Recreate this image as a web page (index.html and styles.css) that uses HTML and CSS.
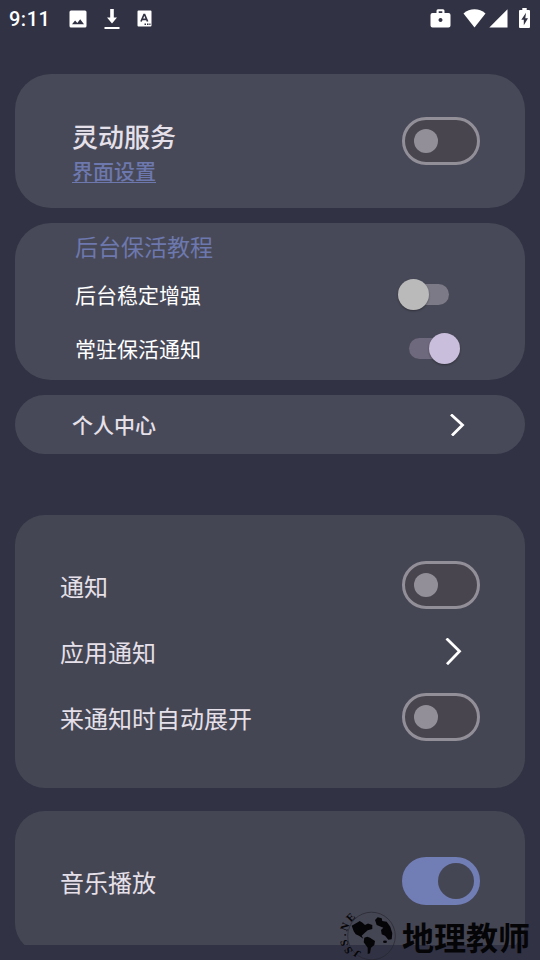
FILE: index.html
```html
<!DOCTYPE html>
<html lang="zh-CN">
<head>
<meta charset="utf-8">
<title>灵动服务</title>
<link rel="stylesheet" href="styles.css">
</head>
<body>
<header class="status">
  <span class="clock">9:11</span>
  <svg class="ic-image" width="18" height="18" viewBox="0 0 18 18"><path fill-rule="evenodd" d="M2 .5h14a1.500 1.500 0 0 1 1.500 1.500v14a1.500 1.500 0 0 1-1.500 1.500H2A1.500 1.500 0 0 1 .5 16V2A1.500 1.500 0 0 1 2 .5zM3 14.200h12l-3.800-5-2.900 3.700-2.200-2.500z"/></svg>
  <svg class="ic-down" width="16" height="21" viewBox="0 0 16 21"><path d="M6.200 0h3.600v8.500H13l-5 6-5-6h3.200zM.5 18h15v2H.5z"/></svg>
  <svg class="ic-lang" width="15" height="17" viewBox="0 0 15 17"><path d="M1.500.5h12a1 1 0 0 1 1 1v14a1 1 0 0 1-1 1h-12a1 1 0 0 1-1-1v-14a1 1 0 0 1 1-1z"/><path class="ink-line" d="M4 11.500 7 4.500h.6l3 7M5 9.300h4.500"/><path class="ink" d="M7.500 13.500h1.500V15H7.500zM10 13.500h1.500V15H10zM12.300 13.500h1.200V15h-1.200z"/></svg>
  <span class="spacer"></span>
  <svg class="ic-case" width="21" height="19" viewBox="0 0 21 19"><path fill-rule="evenodd" d="M6.500 4V1.800Q6.500 .3 8 .3h5Q14.500 .3 14.500 1.800V4h4Q20.500 4 20.500 6v10.500q0 2-2 2h-16q-2 0-2-2V6q0-2 2-2zm2.200 0h3.600V2.300H8.700zm1.800 5a2 2 0 1 0 .01 0z"/></svg>
  <svg class="ic-wifi" width="23" height="19" viewBox="0 0 23 19"><path d="M.5 4.500Q5.500.3 11.500.3t11 4.200L11.500 18.500z"/></svg>
  <svg class="ic-cell" width="19" height="19" viewBox="0 0 19 19"><path d="M18.500.3v18.200H.3z"/></svg>
  <svg class="ic-batt" width="11" height="20" viewBox="0 0 11 20"><path d="M3.300 0h4.400v2H10a1 1 0 0 1 1 1v16a1 1 0 0 1-1 1H1a1 1 0 0 1-1-1V3a1 1 0 0 1 1-1h2.300z"/><path class="ink" d="M7 4.800 2.300 11.700h2.500v5.500L9 10.200H6.300z"/></svg>
</header>
<main class="page">
  <section class="card service">
    <div class="titles">
      <h1 class="title">灵动服务</h1>
      <a class="link">界面设置</a>
    </div>
    <span class="toggle"></span>
  </section>
  <section class="card keep">
    <a class="guide">后台保活教程</a>
    <div class="row small"><span>后台稳定增强</span><span class="slider"></span></div>
    <div class="row small"><span>常驻保活通知</span><span class="slider on"></span></div>
  </section>
  <section class="card profile">
    <span class="label">个人中心</span>
    <svg width="15" height="22" viewBox="0 0 15 22"><path d="M1 .5 12.500 11 2 21.500"/></svg>
  </section>
  <section class="card notice">
    <div class="row"><span>通知</span><span class="toggle"></span></div>
    <div class="row"><span>应用通知</span><svg class="arrow" width="17" height="27" viewBox="0 0 17 27"><path d="M1.500 .5 14.500 13.300 2 26.200"/></svg></div>
    <div class="row"><span>来通知时自动展开</span><span class="toggle"></span></div>
  </section>
  <section class="card music">
    <div class="row"><span>音乐播放</span><span class="toggle on"></span></div>
  </section>
</main>
<div class="mark">
  <svg width="64" height="50" viewBox="0 0 64 50">
    <circle class="ring" cx="33.500" cy="26" r="23.800"/>
    <path d="M13.700 15.700l6-3.400 2-1.300 2.500 1.500 2.800 2.500 3-1.500 4.300 1.500v4l-4.600 1.300-3.400 3-2.600 2.400 1.600 3-4.300-3-3.300-1.400-2-3z"/>
    <path d="M26.300 27.700l3-1 2.700 1 5 3.300-.7 4-3.300 2.700-1 5.600-2.300.8v-6.400l-4-5.400z"/>
    <path d="M37 10l2.700-2.700 4 1 .6 2.700 4.400.7 3.600 5 2 6.600-.6 6-3.400.4-3.300-4-3.300-1.400-.7-4.300 2.300-2.300-6.600-2.700z"/>
    <ellipse cx="47" cy="31.700" rx="2" ry="1.300"/>
    <g class="letters"><text transform="translate(19 44) rotate(-144)">J</text><text transform="translate(10 40.500) rotate(-122)">S</text><text transform="translate(6 33) rotate(-104)">S</text><text transform="translate(6.500 25) rotate(-90)">·</text><text transform="translate(6.500 16.500) rotate(-68)">N</text><text transform="translate(12.500 7) rotate(-46)">E</text></g>
  </svg>
  <span class="brand">地理教师</span>
</div>
</body>
</html>
```
FILE: styles.css
```css
* { box-sizing: border-box; }
body {
  margin: 0;
  width: 540px;
  height: 960px;
  overflow: hidden;
  position: relative;
  background: #313244;
  color: #e5e0e9;
  font-family: "Noto Sans CJK SC", sans-serif;
}
.status {
  height: 37px;
  padding: 0 10px 0 9px;
  display: flex;
  align-items: center;
  fill: #fff;
}
.clock { font: 500 20px/37px Roboto, sans-serif; color: #fff; width: 60px; padding-top: 1px; letter-spacing: 0.5px; }
.ic-down { margin: 1px 0 0 17px; }
.ic-lang { margin-left: 17px; }
.spacer { flex: 1; }
.ic-case { margin-bottom: 1px; }
.ic-wifi { margin: 0 0 1px 12px; }
.ic-cell { margin-left: 3px; }
.ic-batt { margin-left: 11px; margin-bottom: 2px; }
.ink { fill: #313244; }
.ink-line { fill: none; stroke: #313244; stroke-width: 1.7; }
.page {
  height: 908px;
  padding: 37px 15px 0;
  overflow: hidden;
}
.card { background: #484958; border-radius: 36px; }
.service {
  height: 134px;
  padding: 0 45px 0 57px;
  display: flex;
  align-items: center;
  justify-content: space-between;
}
.titles { padding-top: 23px; }
.title { margin: 0; font-size: 26px; line-height: 34px; font-weight: 500; }
.link {
  display: block;
  padding-top: 1px;
  font-size: 21px;
  line-height: 32px;
  font-weight: 500;
  color: #6d78ae;
  text-decoration: underline;
  text-decoration-thickness: 1px;
  text-underline-offset: 3px;
}
.toggle {
  display: flex;
  align-items: center;
  width: 78px;
  height: 48px;
  padding-left: 9px;
  border: 3px solid #938f99;
  border-radius: 24px;
  background: #49454e;
}
.toggle::before { content: ""; width: 24px; height: 24px; border-radius: 50%; background: #938f99; }
.toggle.on { background: #717db5; border-color: #717db5; padding-left: 33px; }
.toggle.on::before { width: 36px; height: 36px; background: #454653; }
.keep { height: 157px; margin-top: 15px; padding: 0 65px 0 60px; }
.guide { display: block; padding-top: 3px; font-size: 23px; line-height: 41px; color: #6d78ae; }
.row { display: flex; align-items: center; justify-content: space-between; }
.small { height: 54px; font-size: 21px; color: #fff; }
.slider {
  display: flex;
  align-items: center;
  width: 40px;
  height: 21px;
  margin-right: 11px;
  border-radius: 11px;
  background: #7b7a86;
}
.slider::before {
  content: "";
  flex: none;
  width: 31px;
  height: 31px;
  margin-left: -11px;
  border-radius: 50%;
  background: #bababa;
  box-shadow: 0 1px 2px rgba(0, 0, 0, 0.35);
}
.slider.on { background: #6e697c; margin-right: 11px; }
.slider.on::before { margin-left: 20px; background: #c9bedb; }
.profile {
  height: 59px;
  margin-top: 15px;
  padding: 0 60px 0 57px;
  border-radius: 30px;
  display: flex;
  align-items: center;
  justify-content: space-between;
  font-size: 21px;
  font-weight: 500;
}
.label { padding-bottom: 2px; }
.profile path, .arrow path { fill: none; stroke: #fff; stroke-width: 2.8; }
.notice {
  height: 273px;
  margin-top: 61px;
  padding: 37px 45px 0;
  border-radius: 30px;
  background: #454653;
}
.notice .row, .music .row { height: 66px; font-size: 24px; }
.arrow { margin-right: 18px; }
.music {
  height: 142px;
  margin-top: 23px;
  padding: 37px 45px 0;
  border-radius: 30px;
  background: #454653;
}
.mark {
  position: absolute;
  left: 338px;
  top: 910px;
  display: flex;
  height: 50px;
  color: #050507;
  fill: #050507;
}
.ring { fill: none; stroke: #25262f; stroke-width: 0.7; }
.letters { font: bold 11px "Liberation Serif", serif; text-anchor: middle; dominant-baseline: central; }
.brand { font: 700 32px/52px "Noto Sans CJK SC", sans-serif; white-space: nowrap; }
```
